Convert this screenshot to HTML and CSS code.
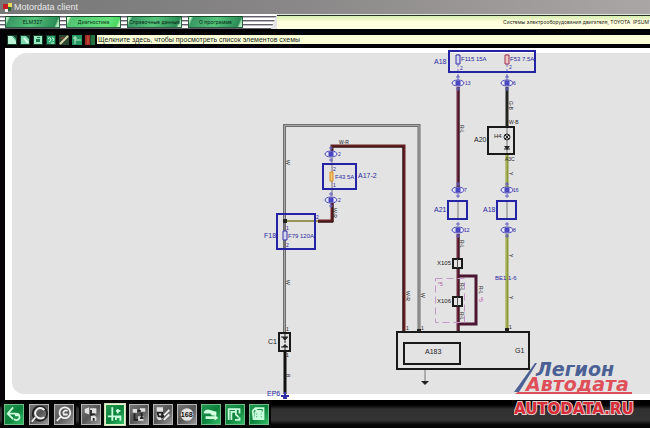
FILE: index.html
```html
<!DOCTYPE html>
<html lang="ru">
<head>
<meta charset="utf-8">
<title>Motordata client</title>
<link rel="stylesheet" href="styles.css">
</head>
<body>
<header class="titlebar">
  <svg class="app-icon" viewBox="0 0 9 9" aria-hidden="true"><path fill="#c61c24" d="M0 1h5v5H0z"/><path fill="#e9dd58" d="M5 0h4v4H5z"/><path fill="#256a36" d="M5 4h3v4H4V6h1z"/><path fill="#fff" d="M2 6h3v3H2z"/></svg>
  <span>Motordata client</span>
</header>
<nav class="tabs">
  <div class="tab-strip">
    <button class="tab">ELM327</button>
    <button class="tab active">Диагностика</button>
    <button class="tab">Справочные данные</button>
    <button class="tab">О программе</button>
  </div>
  <div class="system-name">Системы электрооборудования двигателя, TOYOTA &nbsp;IPSUM</div>
</nav>
<div class="toolbar">
  <div class="tools">
    <button class="tool" aria-label="Документ"><svg viewBox="0 0 10 10"><path fill="#b9f2d4" d="M1 1h5l3 3v5H1z"/><path fill="#37a56d" d="M5 1h1l3 3v2z"/></svg></button>
    <button class="tool" aria-label="Лист"><svg viewBox="0 0 10 10"><path fill="#7fdcae" d="M1 1h5l3 3v5H1z"/><path stroke="#e0fff0" stroke-width="2" d="M4 3l4 5"/></svg></button>
    <button class="tool" aria-label="Печать"><svg viewBox="0 0 10 10"><path fill="#9be9c2" d="M1 1h8v8H1z"/><path fill="#167548" d="M3 4h4v3H3zM4 2h3v1H4z"/></svg></button>
    <button class="tool" aria-label="Справка"><svg viewBox="0 0 10 10"><path fill="#2da871" d="M1 1h8v8H1z"/><path fill="none" stroke="#d7ffeb" d="M2 4q1-3 3 0 0 2-2 3M6 3q3 0 1 3M5 8h3"/></svg></button>
    <button class="tool" aria-label="Правка"><svg viewBox="0 0 10 10"><path fill="#29462f" d="M0 0h10v10H0z"/><path stroke="#ddd3ae" stroke-width="2" d="M1 9l8-8"/><path stroke="#aa3932" d="M2 3h3"/></svg></button>
    <button class="tool" aria-label="Дерево"><svg viewBox="0 0 10 10"><path fill="#24965f" d="M0 0h10v10H0z"/><path fill="none" stroke="#b7edce" d="M3 1v8M3 5h6M1 3h4"/></svg></button>
    <button class="tool" aria-label="Книга"><svg viewBox="0 0 10 10"><path fill="#a32b25" d="M0 0h5v10H0z"/><path fill="#257440" d="M6 0h4v10H6z"/><path stroke="#d95d45" d="M3 1v8"/></svg></button>
  </div>
  <button class="hint">Щелкните здесь, чтобы просмотреть список элементов схемы</button>
</div>
<main class="workspace">
  <div class="sheet">
    <svg class="diagram" viewBox="12 53 638 341" role="img" aria-label="Схема электрооборудования">
      <defs>
        <g id="connector" fill="#e9e9ff" stroke="#4947b5"><ellipse rx="6" ry="3"/><path fill="#4b48c8" d="M-2-2h4v4h-4z"/><path d="M0-8v4M0 4v4M-2-6h4M-2 6h4" stroke="#6260c0"/></g>
      </defs>
      <g fill="none">
        <path stroke="#6d6d6d" stroke-width="3" d="M284.500 333V125.500H419V332"/>
        <path stroke="#a9a9a9" d="M284.500 333V125.500H419V332"/>
        <path stroke="#111" stroke-width="3" d="M285 351v43"/>
        <path stroke="#6a2020" stroke-width="3" d="M332 153v-7h72v186M332 203v18h-14"/>
        <path stroke="#231012" d="M332 153v-6h71v185M333 203v19h-15"/>
        <path stroke="#979655" stroke-width="2" d="M285 221h33"/>
        <path stroke="#6f263f" stroke-width="3" d="M458 87v100M458 234v97"/>
        <path stroke="#250e17" d="M459 87v100M459 234v97"/>
        <path stroke="#22251f" stroke-width="3" d="M507 87v40"/>
        <path stroke="#8b9a39" stroke-width="3" d="M507 155v32M507 234v98"/>
        <path stroke="#c0c67a" d="M506 155v32M506 234v98"/>
        <path stroke="#4d1630" stroke-width="3" d="M458 276h18v48h-18"/>
        <path stroke="#c298c9" stroke-dasharray="7 4" d="M435.500 278.500h29v44h-29z"/>
        <path stroke="#777" d="M458 201v19M507 201v19M332 158v38M284.500 221v28M425 369v13M507 127v28"/>
        <path stroke="#7674bd" stroke-dasharray="3 2" d="M458 54v28M507 54v28"/>
      </g>
      <g class="blue-box"><path d="M449 51h86v21h-86zM323 164h33v25h-33zM277 214h38v35h-38zM448 201h19v18h-19zM497 201h19v18h-19z"/></g>
      <g class="black-box"><path d="M488 127h26v27h-26zM397 332h132v37H397zM404 343h56v21h-56zM279 333h11v18h-11z"/><path fill="#e3e3e3" d="M453 259h9v9h-9zM453 297h9v9h-9z"/></g>
      <g stroke="#555" fill="none"><path d="M457.500 259v9M457.500 297v9"/></g>
      <use href="#connector" x="458" y="83"/><use href="#connector" x="507" y="83"/>
      <use href="#connector" x="458" y="190"/><use href="#connector" x="507" y="190"/>
      <use href="#connector" x="458" y="230"/><use href="#connector" x="507" y="230"/>
      <use href="#connector" x="331" y="154"/><use href="#connector" x="331" y="200"/>
      <g fill="#d5d5f2" stroke="#3634a5"><path d="M456 55h4v9h-4z"/><path stroke="#9c3350" fill="#edc5c5" d="M505 55h4v9h-4z"/><path stroke="#d88b24" fill="#f4c56d" d="M330 172h3v9h-3z"/><path d="M283 231h4v9h-4z"/></g>
      <g stroke="#222" fill="none"><circle cx="507" cy="137" r="3"/><path d="M505 135l4 4M509 135l-4 4M504 149h6M285 333v4M281 337h7M285 341v2M281 347h7M285 347v4"/></g>
      <path fill="#222" d="M504 146h6l-3 4zM282 337h6l-3 4zM282 347h6l-3-3zM421 381h8l-4 4zM283 219h4v4h-4zM417 329h4v3h-4zM505 328h4v4h-4z"/>
      <path stroke="#302da6" stroke-width="2" d="M281 396h8M283 398h4M285 392v6"/>
      <g class="label small blue">
        <text x="461" y="61">F115 15A</text><text x="510" y="61">F53 7.5A</text>
        <text x="335" y="179">F43 5A</text><text x="288" y="238">F79 120A</text>
        <text x="495" y="280">BE1 1-6</text>
      </g>
      <g class="label blue">
        <text x="434" y="64">A18</text><text x="358" y="178">A17-2</text><text x="264" y="238">F18</text>
        <text x="434" y="212">A21</text><text x="483" y="212">A18</text><text x="267" y="396">EP6</text>
      </g>
      <g class="label small">
        <text x="494" y="138">H4</text><text x="437" y="265">X105</text><text x="437" y="303">X106</text>
      </g>
      <g class="label">
        <text x="474" y="142">A20</text><text x="425" y="354">A183</text><text x="515" y="353">G1</text><text x="268" y="344">C1</text>
      </g>
      <g class="pin blue">
        <text x="465" y="85">13</text><text x="513" y="85">6</text><text x="464" y="192">7</text><text x="513" y="192">16</text><text x="464" y="232">12</text><text x="513" y="232">8</text>
        <text x="338" y="156">2</text><text x="338" y="202">2</text><text x="333" y="171">2</text><text x="333" y="187">1</text><text x="286" y="230">1</text><text x="286" y="247">2</text><text x="316" y="219">2</text>
        <text x="460" y="70">2</text><text x="509" y="69">2</text>
      </g>
      <g class="pin">
        <text x="339" y="144">W-R</text><text x="509" y="124">W-B</text><text x="505" y="161">A3C</text><text x="286" y="331">1</text><text x="286" y="357">1</text><text x="406" y="330">1</text><text x="421" y="330">1</text><text x="509" y="329">1</text>
        <text transform="translate(286 160) rotate(90)">W</text><text transform="translate(286 280) rotate(90)">W</text><text transform="translate(286 374) rotate(90)">B</text>
        <text transform="translate(406 291) rotate(90)">W-R</text><text transform="translate(421 293) rotate(90)">W</text><text transform="translate(333 208) rotate(90)">W-R</text>
        <text transform="translate(460 125) rotate(90)">R-L</text><text transform="translate(460 240) rotate(90)">R-L</text><text transform="translate(460 283) rotate(90)">R-L</text><text transform="translate(460 312) rotate(90)">R-L</text>
        <text transform="translate(509 101) rotate(90)">G-B</text><text transform="translate(509 172) rotate(90)">Y</text><text transform="translate(509 254) rotate(90)">Y</text><text transform="translate(509 296) rotate(90)">Y</text>
        <text transform="translate(479 286) rotate(90)">R-L</text><text class="magenta" transform="translate(479 297) rotate(90)">*5</text><text class="magenta" x="438" y="286">*5</text>
      </g>
    </svg>
  </div>
</main>
<footer class="dock">
  <div class="group first">
    <button class="key green" aria-label="Назад"><svg viewBox="0 0 20 20"><path d="M9 2L3 9l6 6M4 9h8q5 0 4 5-3 4-6 1M11 11h4"/></svg></button>
    <button class="key" aria-label="Повернуть"><svg viewBox="0 0 20 20"><circle class="dark" cx="11" cy="9" r="8"/><path d="M16 5q-4-4-8-1-4 4-1 8 4 4 9 1M6 13l-4 5"/></svg></button>
    <button class="key" aria-label="Поиск"><svg viewBox="0 0 20 20"><circle cx="11" cy="8" r="6"/><path d="M7 12l-5 5M9 9q1-5 5-3M9 10h5"/></svg></button>
  </div>
  <div class="group">
    <button class="key" aria-label="Узлы"><svg viewBox="0 0 20 20"><path class="fill" d="M3 4l5-2v8l-5-2zM9 3h7v6H9zM10 12l3-2 3 3v4h-6z"/><path class="dark" d="M10 5v5h4M13 14v3"/></svg></button>
    <button class="key green selected" aria-label="Схема"><svg viewBox="0 0 20 20"><path d="M7 2v15M2 12h15M13 4v5M11 6h5M11 16v-3h5v4"/></svg></button>
    <button class="key" aria-label="Элементы"><svg viewBox="0 0 20 20"><path class="fill" d="M3 4h5v4H3zM11 3h6v4h-6zM9 12h6v5H9z"/><path class="dark" d="M5 9v7h4M8 6h4M13 8v5M11 14h4"/></svg></button>
    <button class="key" aria-label="Проверка"><svg viewBox="0 0 20 20"><path class="fill" d="M3 2h7v12q-4 5-7 0z"/><path class="dark" d="M4 8h5v4H5zM8 14l8-8"/><path d="M11 11l6-6M11 16l6-6"/></svg></button>
    <button class="key" aria-label="Коды 168"><svg viewBox="0 0 20 20"><circle class="fill" cx="10" cy="10" r="7"/><text x="3" y="13">168</text></svg></button>
    <button class="key green" aria-label="Обмен"><svg viewBox="0 0 20 20"><path class="fill" d="M2 7q3-4 7-2l7 2v4h-5l-2-2H2zM10 12h4v-2l4 4-4 3v-2H4v-3z"/></svg></button>
    <button class="key green" aria-label="Ремонт"><svg viewBox="0 0 20 20"><path d="M3 16V4h8v7M6 16V7h5v3l3 3M12 4h3v5M10 16h5v-3"/></svg></button>
    <button class="key green" aria-label="Детали"><svg viewBox="0 0 20 20"><path d="M3 6l3-3h9v12H4zM7 3v3h6M6 8h3v6H6zM11 8h3v6h-3zM6 11h8"/></svg></button>
  </div>
</footer>
<aside class="brand">
  <svg viewBox="0 -8 124 74" role="img" aria-label="Легион Автодата AUTODATA.RU">
    <path fill="#4b6093" d="M21 1h2L5 30H0z"/><path fill="#df4f5a" d="M4 30h114v2H1z"/>
    <text class="brand-blue" x="22" y="14">Легион</text>
    <text class="brand-red" x="12" y="29">Автодата</text>
    <text class="brand-site" x="0" y="52">AUTODATA.RU</text>
  </svg>
</aside>
</body>
</html>
```
FILE: styles.css
```css
* { box-sizing: border-box; }
body {
  margin: 0;
  min-height: 100vh;
  display: flex;
  flex-direction: column;
  position: relative;
  overflow: hidden;
  background: #060406;
  font-family: "Liberation Sans", sans-serif;
}
button { margin: 0; padding: 0; border: 0; font: inherit; }
svg { display: block; }
.titlebar {
  height: 14px;
  display: flex;
  align-items: center;
  gap: 2px;
  padding: 0 3px;
  background: linear-gradient(90deg, #777 0, #898787 45%, #aaa6a5 100%);
  color: #e8e8e8;
  font-size: 9px;
  line-height: 12px;
}
.app-icon { width: 9px; height: 9px; }
.tabs { display: flex; height: 15px; background: #e4e4e4; }
.tab-strip {
  width: 277px;
  flex: none;
  display: flex;
  gap: 6px;
  padding: 2px 0 0 5px;
  background: repeating-linear-gradient(#fff 0 2px, #625f69 2px 3px, #bbb8c1 3px 4px);
  clip-path: polygon(0 0, 100% 0, 271px 100%, 0 100%);
}
.tab {
  width: 55px;
  height: 12px;
  white-space: nowrap;
  border: 1px solid #285f40;
  border-top-color: #154926;
  background: linear-gradient(115deg, #b1e9be 0 4%, #389964 8%, #55c47d 50%, #2b8c56 91%, #b1e9be 95%);
  color: #062b15;
  font-family: Inter, "Liberation Sans", sans-serif;
  font-size: 5px;
  line-height: 10px;
}
.tab.active { background: linear-gradient(115deg, #d1fbc8 0 4%, #51c574 8%, #66e27b 75%, #49d661 92%, #c5f8bd 96%); }
.system-name {
  flex: 1;
  min-width: 0;
  margin-top: 1px;
  padding-right: 1px;
  text-align: right;
  white-space: nowrap;
  border-top: 1px solid #263221;
  background: linear-gradient(#d6edb0, #ffffdc 45%, #ffffe2);
  color: #252521;
  font-family: Inter, "Liberation Sans", sans-serif;
  font-size: 5px;
  line-height: 13px;
}
.toolbar {
  height: 19px;
  display: flex;
  align-items: center;
  gap: 2px;
  padding: 2px 0 0 7px;
  background: #030205;
}
.tools { display: flex; gap: 3px; }
.tool { width: 10px; height: 10px; background: #163d29; }
.hint {
  flex: 1;
  height: 9px;
  padding-left: 1px;
  text-align: left;
  white-space: nowrap;
  background: #fbffd7;
  color: #20251b;
  font-size: 7px;
  line-height: 9px;
}
.workspace {
  flex: 1;
  margin-left: 5px;
  padding: 5px 0 6px 7px;
  background: #fff;
}
.sheet { background: #e3e3e3; border-radius: 15px 0 0 12px; }
.diagram { width: 100%; height: auto; overflow: visible; }
.blue-box { fill: none; stroke: #2423a5; stroke-width: 2px; }
.black-box { fill: none; stroke: #191919; stroke-width: 2px; }
.label { font-size: 7px; fill: #222; }
.small { font-size: 6px; }
.pin { font-size: 5px; fill: #222; }
.blue { fill: #2927a0; }
.magenta { fill: #b64fa5; }
.dock {
  height: 28px;
  display: flex;
  align-items: center;
  gap: 7px;
  padding-left: 4px;
  background: linear-gradient(#000 0 5px, #303030 9px, #343434 20px, #050505 25px);
}
.group { display: flex; gap: 4px; background: #050505; }
.group.first { gap: 5px; }
.key {
  width: 20px;
  height: 21px;
  border: 1px solid #b4b4b4;
  background: linear-gradient(135deg, #777, #555 50%, #999);
  box-shadow: 0 0 0 2px #050505;
}
.key svg { width: 18px; height: 19px; fill: none; stroke: #f1f1f1; stroke-width: 2px; }
.key .fill { fill: #e2e2e2; stroke: none; }
.key .dark { stroke: #222; }
.key text { fill: #111; stroke: none; font-size: 8px; font-weight: bold; }
.key.green { border-color: #70bc89; background: linear-gradient(135deg, #23984f, #0c813b 50%, #31bd67); }
.key.green svg { stroke: #caffdb; }
.key.green .fill { fill: #d2ffdd; }
.key.selected { border-color: #e7f4cc; box-shadow: 0 0 0 1px #c9dcb6; }
.brand {
  position: absolute;
  right: 12px;
  bottom: 0;
  width: 124px;
}
.brand text { font-family: "DejaVu Sans", sans-serif; font-weight: bold; }
.brand .brand-blue { font-size: 19px; font-style: italic; fill: #4b6093; }
.brand .brand-red { font-size: 19px; font-style: italic; fill: #df4f5a; }
.brand .brand-site { font-size: 15px; fill: #d72b37; stroke: #e3caca; stroke-width: 2px; paint-order: stroke; }
```
